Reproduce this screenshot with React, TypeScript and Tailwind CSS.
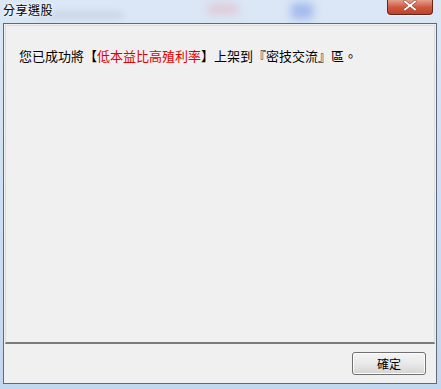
import React from "react";

const font = { fontFamily: '"Noto Sans CJK TC", "Noto Sans", sans-serif' };

const CloseButton = () => (
  <div className="ml-auto mr-[4px] w-[46px] h-[15px] rounded-b-[4px] border border-t-0 border-[#6b2317] bg-gradient-to-b from-[#e4a08e] via-[#cf5a41] to-[#c0402a] flex items-start justify-center shadow-[0_1px_1px_rgba(255,255,255,0.8)]">
    <svg width="14" height="11" viewBox="0 0 14 11">
      <path
        d="M2 0 L7 4 L12 0 L14 1.5 L9 5.5 L14 9.5 L12 11 L7 7 L2 11 L0 9.5 L5 5.5 L0 1.5 Z"
        fill="#ffffff"
        stroke="#7a2a1c"
        strokeWidth="0.6"
      />
    </svg>
  </div>
);

const TitleBar = () => (
  <div className="relative h-[23px] flex items-start overflow-hidden">
    {/* blurred glass background */}
    <div className="absolute left-[30px] top-[12px] w-[90px] h-[6px] bg-[#9aa9bb] opacity-30 blur-[3px]" />
    <div className="absolute left-[205px] top-[4px] w-[30px] h-[10px] bg-[#e59aa8] opacity-40 blur-[5px]" />
    <div className="absolute left-[288px] top-[3px] w-[22px] h-[16px] bg-[#6f8fe8] opacity-50 blur-[4px]" />
    <span
      className="relative mt-[1px] text-[12px] leading-[18px] tracking-[0.5px] text-black [text-shadow:0_0_6px_#ffffff,0_0_3px_#ffffff]"
      style={font}
    >
      分享選股
    </span>
    <CloseButton />
  </div>
);

export default function App() {
  return (
    <div className="w-[441px] h-[389px] bg-gradient-to-b from-[#dbe7f5] via-[#cddff2] to-[#c3d7ef] flex flex-col pl-[3px] pr-[4px] pb-[5px]">
      <TitleBar />
      <div className="flex-1 flex flex-col border border-[#5c6b7c] bg-[#f0f0f0]">
        <div className="flex-1 mx-[1px] mt-[1px] border border-b-[2px] border-[#dcdcdc] border-b-[#7a7a7a] bg-[#f0f0f0] pt-[21px] pl-[13px]">
          <p className="text-[13px] leading-[18px] text-black" style={font}>
            您已成功將【<span className="text-[#e00000]">低本益比高殖利率</span>】上架到『密技交流』區。
          </p>
        </div>
        <div className="h-[39px] flex justify-end items-start pt-[8px] pr-[10px]">
          <button
            className="w-[74px] h-[23px] rounded-[3px] border border-[#707070] bg-gradient-to-b from-[#f4f4f4] via-[#e9e9e9] to-[#d4d4d4] text-[12px] text-black shadow-[inset_0_0_0_1px_#fcfcfc]"
            style={font}
          >
            確定
          </button>
        </div>
      </div>
    </div>
  );
}
